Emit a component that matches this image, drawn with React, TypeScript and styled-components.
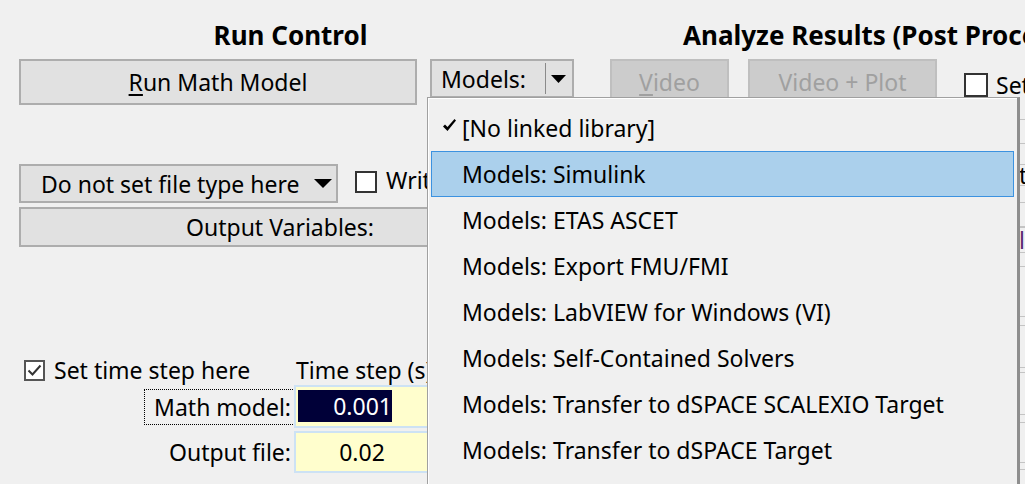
import React from "react";
import styled, { createGlobalStyle } from "styled-components";

const GlobalStyle = createGlobalStyle`
  html, body { margin: 0; padding: 0; background: #f0f0f0; overflow: hidden; }
  body { font-family: "Noto Sans", "Open Sans", sans-serif; color: #000; font-size: 23px; }
  * { box-sizing: border-box; }
`;

const Page = styled.div`
  position: relative;
  width: 1025px;
  height: 484px;
  overflow: hidden;
  display: flex;
  align-items: flex-start;
  padding-left: 19px;
  gap: 36px;
`;

const Group = styled.section<{ $w: number }>`
  flex: 0 0 ${(p) => p.$w}px;
  display: flex;
  flex-direction: column;
`;

const Title = styled.div<{ $align?: string; $pl?: number; $pr?: number }>`
  height: 59px;
  padding-top: 11px;
  padding-left: ${(p) => p.$pl ?? 0}px;
  padding-right: ${(p) => p.$pr ?? 0}px;
  display: flex;
  align-items: center;
  justify-content: ${(p) => p.$align ?? "center"};
  font-weight: 700;
  font-size: 26px;
  white-space: nowrap;
`;

const Row = styled.div<{ $gap: number; $mt?: number }>`
  display: flex;
  align-items: flex-start;
  gap: ${(p) => p.$gap}px;
  margin-top: ${(p) => p.$mt ?? 0}px;
  white-space: nowrap;
`;

const Button = styled.div<{ $w: number; $h: number; $disabled?: boolean; $pt?: number }>`
  flex: 0 0 ${(p) => p.$w}px;
  height: ${(p) => p.$h}px;
  padding-top: ${(p) => p.$pt ?? 0}px;
  display: flex;
  align-items: center;
  justify-content: center;
  background: ${(p) => (p.$disabled ? "#cccccc" : "#e1e1e1")};
  border: 2px solid ${(p) => (p.$disabled ? "#bfbfbf" : "#adadad")};
  color: ${(p) => (p.$disabled ? "#a0a0a0" : "#000")};
  u { text-decoration-thickness: 2px; text-underline-offset: 3px; }
`;

const Combo = styled.div<{ $w: number }>`
  flex: 0 0 ${(p) => p.$w}px;
  height: 39px;
  display: flex;
  align-items: center;
  background: #e1e1e1;
  border: 2px solid #adadad;
`;

const ComboText = styled.span<{ $pl: number }>`
  flex: 1;
  padding-left: ${(p) => p.$pl}px;
`;

const ComboSep = styled.span`
  width: 1px;
  align-self: stretch;
  margin: 2px 0;
  background: #8a8a8a;
`;

const Arrow = styled.svg<{ $mr: number }>`
  margin-right: ${(p) => p.$mr}px;
  margin-left: 5px;
  flex: none;
`;

const Check = styled.span<{ $size: number; $checked?: boolean; $mt?: number }>`
  flex: 0 0 ${(p) => p.$size}px;
  width: ${(p) => p.$size}px;
  height: ${(p) => p.$size}px;
  margin-top: ${(p) => p.$mt ?? 0}px;
  background: #fff;
  border: 2px solid ${(p) => (p.$checked ? "#555" : "#333")};
  display: flex;
  align-items: center;
  justify-content: center;
`;

const CheckLabel = styled.label<{ $ml?: number; $gap?: number }>`
  display: flex;
  align-items: center;
  gap: ${(p) => p.$gap ?? 9}px;
  margin-left: ${(p) => p.$ml ?? 0}px;
  white-space: nowrap;
`;

const CheckText = styled.span<{ $mt?: number }>`
  margin-top: ${(p) => p.$mt ?? 0}px;
`;

const TimeGrid = styled.div`
  margin-top: 111px;
  display: grid;
  grid-template-columns: 275px 136px;
  grid-template-rows: 24px 43px 42px;
  row-gap: 3px;
  white-space: nowrap;
`;

const ColHead = styled.div`
  padding-left: 2px;
  display: flex;
  align-items: center;
`;

const FieldLabel = styled.div<{ $focus?: boolean }>`
  justify-self: end;
  align-self: center;
  width: 151px;
  height: 36px;
  padding-right: 3px;
  display: flex;
  align-items: center;
  justify-content: flex-end;
  border: 1px dotted ${(p) => (p.$focus ? "#000" : "transparent")};
  margin-right: -1px;
`;

const Input = styled.div`
  background: #fffecd;
  border: 2px solid #cde2f4;
  display: flex;
  align-items: center;
  justify-content: center;
  position: relative;
`;

const Selection = styled.span`
  position: absolute;
  left: 2px;
  top: 3px;
  bottom: 4px;
  width: 94px;
  background: #000038;
  color: #fff;
  display: flex;
  align-items: center;
  justify-content: flex-end;
`;

const HiddenColumn = styled.div`
  margin-top: 18px;
  margin-left: 409px;
  width: 120px;
  display: flex;
  flex-direction: column;
`;

const HiddenBox = styled.div<{ $h: number; $mt: number }>`
  height: ${(p) => p.$h}px;
  margin-top: ${(p) => p.$mt}px;
  border-top: 1px solid #c4c4c4;
  border-bottom: 1px solid #c4c4c4;
  display: flex;
  align-items: center;
  white-space: nowrap;
`;

const HiddenText = styled.span<{ $c?: string }>`
  color: ${(p) => p.$c ?? "#000"};
`;

const Menu = styled.div`
  position: absolute;
  left: 427px;
  top: 97px;
  width: 593px;
  height: 420px;
  background: #f0f0f0;
  border: 1px solid #a0a0a0;
  border-right: 3px solid #8e8e8e;
  box-shadow: inset 1px 1px 0 #fff;
  padding-top: 7px;
  display: flex;
  flex-direction: column;
`;

const MenuItem = styled.div<{ $hot?: boolean }>`
  position: relative;
  height: 46px;
  flex: none;
  margin: 0 3px;
  padding-left: 30px;
  display: flex;
  align-items: center;
  white-space: nowrap;
  background: ${(p) => (p.$hot ? "#abd0ec" : "transparent")};
  border: 1px solid ${(p) => (p.$hot ? "#3c92e0" : "transparent")};
`;

const CheckMark = styled.svg`
  position: absolute;
  left: 10px;
  top: 12px;
`;

const TriDown = ({ w, h, mr }: { w: number; h: number; mr: number }) => (
  <Arrow $mr={mr} width={w} height={h} viewBox={`0 0 ${w} ${h}`}>
    <polygon points={`0,0 ${w},0 ${w / 2},${h}`} fill="#000" />
  </Arrow>
);

const menuItems = [
  "[No linked library]",
  "Models: Simulink",
  "Models: ETAS ASCET",
  "Models: Export FMU/FMI",
  "Models: LabVIEW for Windows (VI)",
  "Models: Self-Contained Solvers",
  "Models: Transfer to dSPACE SCALEXIO Target",
  "Models: Transfer to dSPACE Target",
  "Models: Veristand",
];

export default function App() {
  return (
    <>
      <GlobalStyle />
      <Page>
        <Group $w={555}>
          <Title $pr={12}>Run Control</Title>
          <Row $gap={13}>
            <Button $w={398} $h={46}>
              <span>
                <u>R</u>un Math Model
              </span>
            </Button>
            <Combo $w={144}>
              <ComboText $pl={9}>Models:</ComboText>
              <ComboSep />
              <TriDown w={15} h={8} mr={6} />
            </Combo>
          </Row>
          <Row $gap={17} $mt={59}>
            <Combo $w={319}>
              <ComboText $pl={20}>Do not set file type here</ComboText>
              <TriDown w={18} h={9} mr={4} />
            </Combo>
            <CheckLabel>
              <Check $size={22} $mt={3} />
              Write output file
            </CheckLabel>
          </Row>
          <Row $gap={0} $mt={4}>
            <Button $w={522} $h={40}>
              Output Variables:
            </Button>
          </Row>
          <TimeGrid>
            <CheckLabel $ml={5}>
              <Check $size={21} $checked>
                <svg width="15" height="13" viewBox="0 0 15 13">
                  <polyline points="1.5,6.5 5.5,10.5 13.5,1.5" fill="none" stroke="#333" strokeWidth="2" />
                </svg>
              </Check>
              Set time step here
            </CheckLabel>
            <ColHead>Time step (s)</ColHead>
            <FieldLabel $focus>Math model:</FieldLabel>
            <Input>
              <Selection>0.001</Selection>
            </Input>
            <FieldLabel>Output file:</FieldLabel>
            <Input>0.02</Input>
          </TimeGrid>
        </Group>
        <Group $w={600}>
          <Title $align="flex-start" $pl={73}>
            Analyze Results (Post Processing)
          </Title>
          <Row $gap={19}>
            <Button $w={119} $h={41} $pt={4} $disabled>
              <span>
                <u>V</u>ideo
              </span>
            </Button>
            <Row $gap={27}>
              <Button $w={189} $h={41} $pt={4} $disabled>
                Video + Plot
              </Button>
              <CheckLabel $gap={8}>
                <Check $size={24} $mt={10} />
                <CheckText $mt={10}>Set time range</CheckText>
              </CheckLabel>
            </Row>
          </Row>
          <HiddenColumn>
            <HiddenBox $h={25} $mt={0} />
            <HiddenBox $h={22} $mt={20}>
              <HiddenText>to</HiddenText>
            </HiddenBox>
            <HiddenBox $h={25} $mt={16} />
            <HiddenBox $h={26} $mt={0}>
              <HiddenText $c="#5a2a70">l</HiddenText>
            </HiddenBox>
            <HiddenBox $h={51} $mt={13} />
            <HiddenBox $h={43} $mt={8} />
            <HiddenBox $h={43} $mt={4} />
            <HiddenBox $h={41} $mt={7} />
            <HiddenBox $h={41} $mt={6} />
          </HiddenColumn>
        </Group>
        <Menu>
          {menuItems.map((t, i) => (
            <MenuItem key={t} $hot={i === 1}>
              {i === 0 && (
                <CheckMark width="15" height="15" viewBox="0 0 15 15">
                  <path d="M1 8.5 L3 6.5 L5.5 9 L12.5 1 L14 2.5 L5.5 13 Z" fill="#000" />
                </CheckMark>
              )}
              {t}
            </MenuItem>
          ))}
        </Menu>
      </Page>
    </>
  );
}
